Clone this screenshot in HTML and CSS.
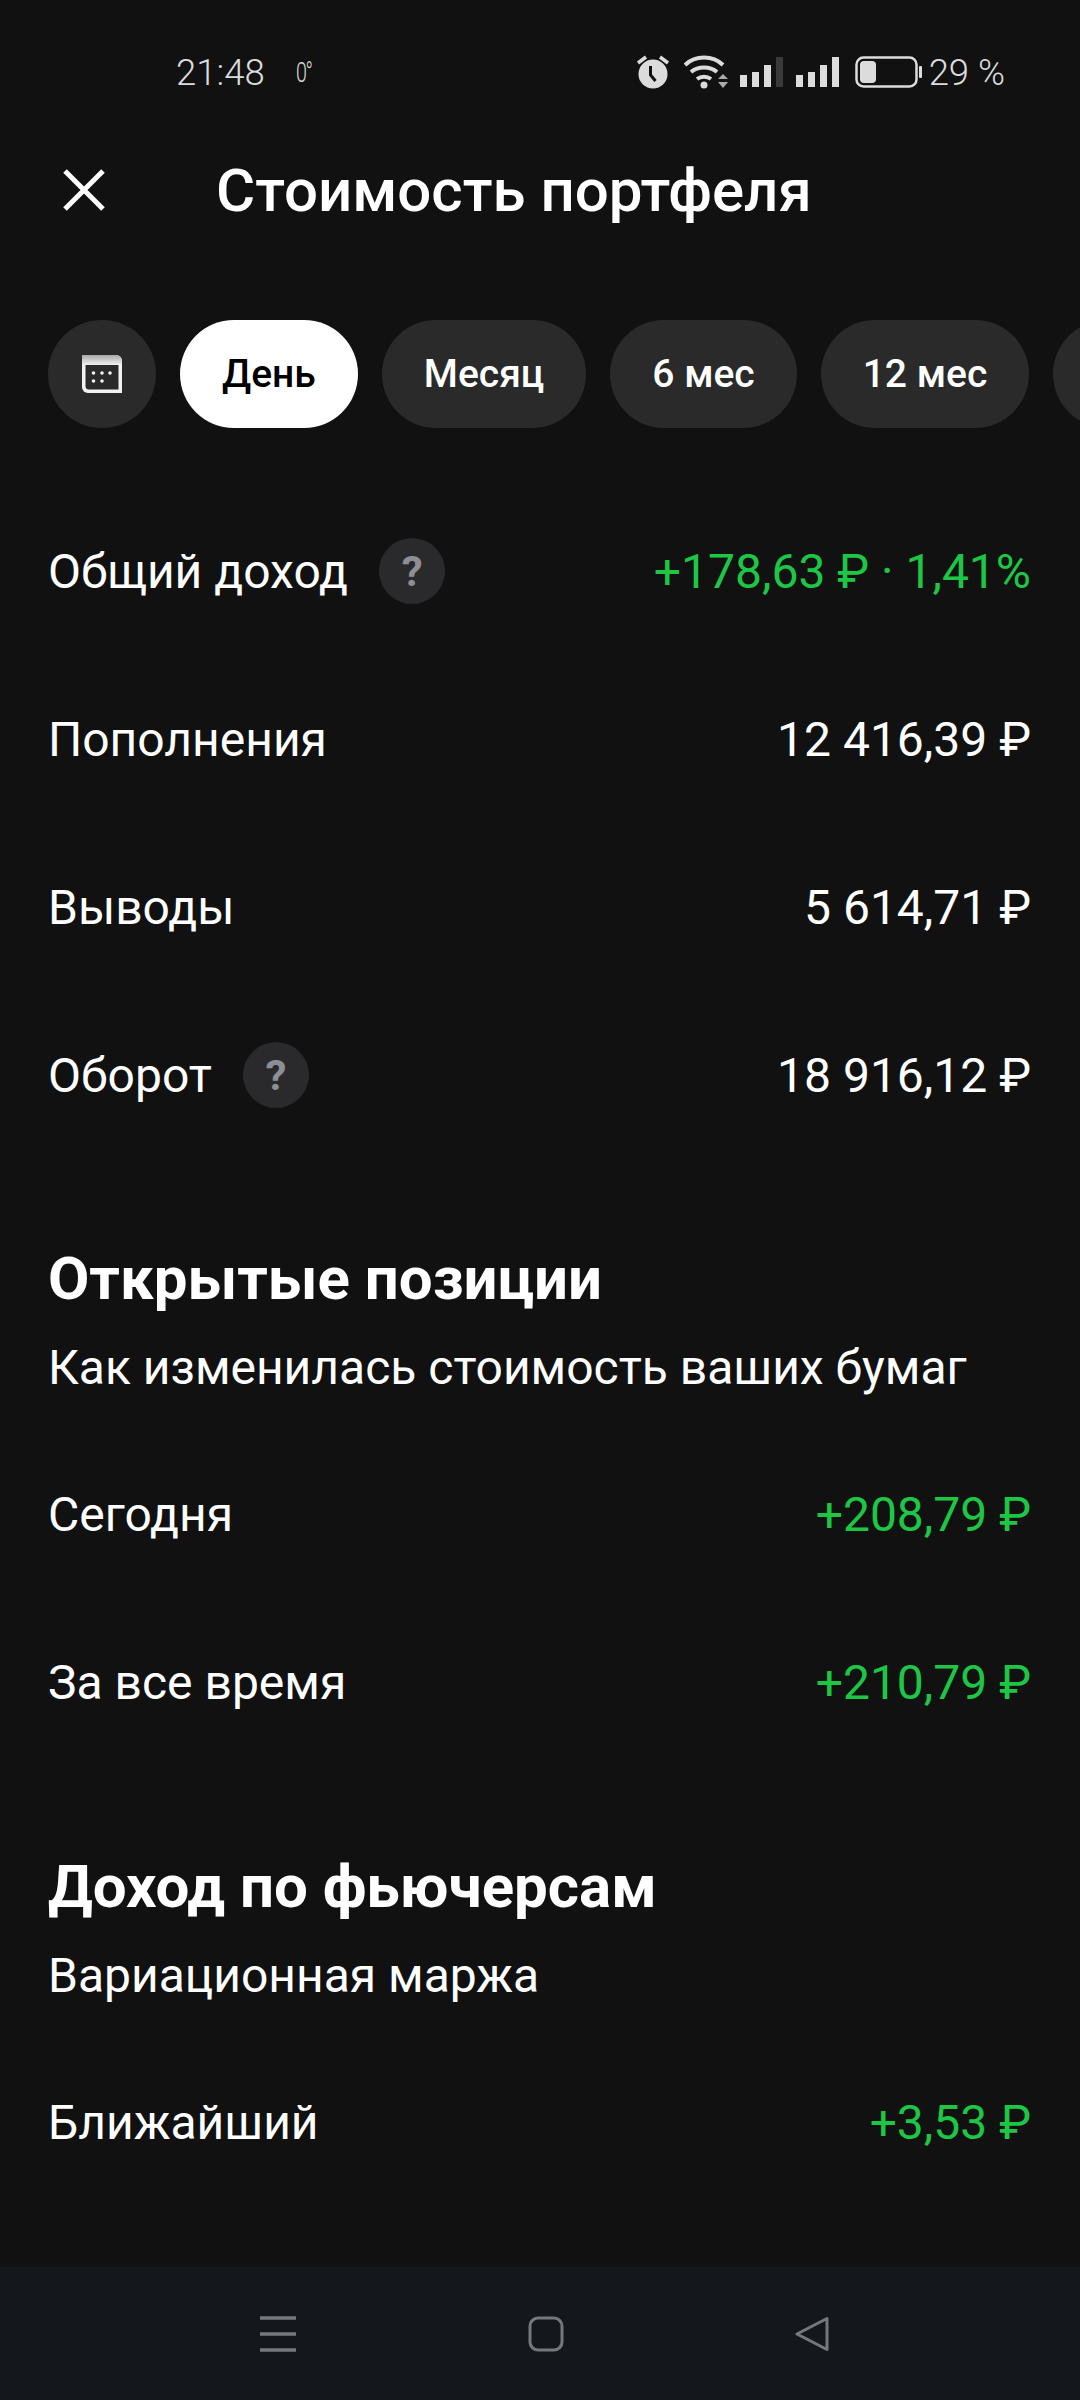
FILE: index.html
```html
<!DOCTYPE html>
<html lang="ru">
<head>
    <meta charset="UTF-8">
    <meta name="viewport" content="width=device-width, initial-scale=1.0">
    <title>Стоимость портфеля</title>
    <link rel="stylesheet" href="styles.css">
</head>
<body>
    <div class="screen">
        <!-- Статус-бар -->
        <div class="status-bar">
            <div class="status-left">
                <span class="time">21:48</span>
                <span class="temp">0°</span>
            </div>
            <div class="status-right">
                <svg class="ic-alarm" width="34" height="34" viewBox="0 0 34 34">
                    <circle cx="17" cy="19" r="14.5" fill="#dcdcdc"/>
                    <path d="M14.5 11v9l5 6" fill="none" stroke="#111112" stroke-width="3"/>
                    <path d="M2 8l8-6M32 8l-8-6" stroke="#dcdcdc" stroke-width="3.5" fill="none"/>
                </svg>
                <svg class="ic-wifi" width="44" height="36" viewBox="0 0 44 36">
                    <path d="M1 11C11 1 29 1 39 11M7 18c7-6 19-6 26 0M13 25c4-3 10-3 14 0" fill="none" stroke="#dcdcdc" stroke-width="4"/>
                    <circle cx="20" cy="31" r="3.5" fill="#dcdcdc"/>
                    <path d="M34 25h10l-5-5zM34 28h10l-5 6z" fill="#aaa"/>
                </svg>
                <div class="signal">
                    <i class="b1"></i><i class="b2"></i><i class="b3"></i><i class="b4 off"></i>
                </div>
                <div class="signal signal-second">
                    <i class="b1"></i><i class="b2"></i><i class="b3"></i><i class="b4"></i>
                </div>
                <svg class="ic-battery" width="67" height="32" viewBox="0 0 67 32">
                    <rect x="1.5" y="1.5" width="60" height="29" rx="7" fill="none" stroke="#dcdcdc" stroke-width="2.5"/>
                    <rect x="5" y="5" width="16" height="22" rx="4" fill="#dcdcdc"/>
                    <rect x="64" y="10" width="3" height="12" rx="1" fill="#dcdcdc"/>
                </svg>
                <span class="percent">29 %</span>
            </div>
        </div>

        <!-- Заголовок -->
        <div class="header">
            <svg class="close" width="44" height="44" viewBox="0 0 44 44">
                <path d="M3 3l38 38M41 3L3 41" stroke="#fff" stroke-width="5" fill="none"/>
            </svg>
            <h1>Стоимость портфеля</h1>
        </div>

        <!-- Периоды -->
        <div class="periods">
            <div class="pill pill-icon">
                <svg width="40" height="38" viewBox="0 0 40 38">
                    <defs>
                        <linearGradient id="calTop" x1="0" y1="0" x2="0" y2="1">
                            <stop offset="0" stop-color="#a8a8a8"/>
                            <stop offset="1" stop-color="#f2f2f2"/>
                        </linearGradient>
                    </defs>
                    <path d="M0 0h34a6 6 0 0 1 6 6v32H6a6 6 0 0 1-6-6z" fill="#f2f2f2"/>
                    <path d="M0 0h34a6 6 0 0 1 6 6v4H0z" fill="url(#calTop)"/>
                    <path d="M3.5 10h33v24.500H7a3.500 3.500 0 0 1-3.500-3.500z" fill="#2a2a2b"/>
                    <g fill="#f2f2f2">
                        <circle cx="11.500" cy="18" r="1.800"/><circle cx="20" cy="18" r="1.800"/><circle cx="28" cy="18" r="1.800"/>
                        <circle cx="11.500" cy="26" r="1.800"/><circle cx="20" cy="26" r="1.800"/>
                    </g>
                </svg>
            </div>
            <div class="pill active">День</div>
            <div class="pill">Месяц</div>
            <div class="pill">6 мес</div>
            <div class="pill">12 мес</div>
            <div class="pill pill-cut"></div>
        </div>

        <!-- Итоги -->
        <div class="rows">
            <div class="row">
                <div class="row-label">Общий доход <span class="hint">?</span></div>
                <div class="green">+178,63 ₽ · 1,41%</div>
            </div>
            <div class="row">
                <div class="row-label">Пополнения</div>
                <div>12 416,39 ₽</div>
            </div>
            <div class="row">
                <div class="row-label">Выводы</div>
                <div>5 614,71 ₽</div>
            </div>
            <div class="row">
                <div class="row-label">Оборот <span class="hint">?</span></div>
                <div>18 916,12 ₽</div>
            </div>
        </div>

        <!-- Открытые позиции -->
        <div class="section">
            <h2>Открытые позиции</h2>
            <p>Как изменилась стоимость ваших бумаг</p>
        </div>
        <div class="rows">
            <div class="row">
                <div class="row-label">Сегодня</div>
                <div class="green">+208,79 ₽</div>
            </div>
            <div class="row">
                <div class="row-label">За все время</div>
                <div class="green">+210,79 ₽</div>
            </div>
        </div>

        <!-- Доход по фьючерсам -->
        <div class="section">
            <h2>Доход по фьючерсам</h2>
            <p>Вариационная маржа</p>
        </div>
        <div class="rows">
            <div class="row">
                <div class="row-label">Ближайший</div>
                <div class="green">+3,53 ₽</div>
            </div>
        </div>

        <!-- Навигация -->
        <div class="nav-bar">
            <svg width="36" height="36" viewBox="0 0 36 36">
                <path d="M0 2h36M0 18h36M0 34h36" stroke="#75787c" stroke-width="3.500" fill="none"/>
            </svg>
            <svg width="36" height="36" viewBox="0 0 36 36">
                <rect x="2" y="2" width="32" height="32" rx="8" fill="none" stroke="#75787c" stroke-width="3"/>
            </svg>
            <svg width="36" height="36" viewBox="0 0 36 36">
                <path d="M32 2.500v31L2 18z" fill="none" stroke="#75787c" stroke-width="3" stroke-linejoin="round"/>
            </svg>
        </div>
    </div>
</body>
</html>
```

FILE: styles.css
```css
* {
    box-sizing: border-box;
}

body {
    margin: 0;
    background-color: #111112;
    font-family: Roboto, "Noto Sans", sans-serif;
    color: #fff;
}

.screen {
    width: 1080px;
    height: 2400px;
    display: flex;
    flex-direction: column;
    overflow: hidden;
}

.status-bar {
    height: 72px;
    margin-top: 36px;
    padding: 0 75px 0 176px;
    display: flex;
    justify-content: space-between;
    align-items: center;
    color: #dcdcdc;
    font-size: 36.500px;
}

.status-left {
    display: flex;
    align-items: center;
    gap: 31px;
}

.time {
    font-weight: 300;
}

.temp {
    font-size: 28px;
    font-weight: 300;
    letter-spacing: -2px;
    transform: scaleX(0.7);
    transform-origin: left center;
}

.status-right {
    display: flex;
    align-items: center;
    gap: 12px;
}

.ic-alarm {
    margin-right: 2px;
}

.signal-second {
    margin-left: 1px;
}

.ic-battery {
    margin-left: 4px;
}

.percent {
    font-weight: 300;
    margin-left: -5px;
}

.signal {
    display: flex;
    align-items: flex-end;
    gap: 5px;
    height: 30px;
}

.signal i {
    width: 7px;
    background-color: #dcdcdc;
}

.signal .b1 { height: 12px; }
.signal .b2 { height: 15px; }
.signal .b3 { height: 22px; }
.signal .b4 { height: 30px; }
.signal .off { background-color: #3a3a3a; }

.header {
    height: 116px;
    margin-top: 24px;
    padding-left: 62px;
    display: flex;
    align-items: center;
}

.close {
    flex-shrink: 0;
}

h1 {
    margin: 0 0 0 110px;
    font-size: 60px;
    font-weight: 500;
}

.periods {
    margin-top: 72px;
    padding-left: 48px;
    display: flex;
    gap: 24px;
}

.pill {
    flex-shrink: 0;
    height: 108px;
    padding: 0 42px;
    border-radius: 54px;
    background-color: #2a2a2b;
    display: flex;
    align-items: center;
    font-size: 39px;
    font-weight: 500;
}

.pill-icon {
    width: 108px;
    padding: 0;
    justify-content: center;
}

.pill-cut {
    width: 108px;
}

.active {
    background-color: #fff;
    color: #000;
}

.rows {
    display: flex;
    flex-direction: column;
}

.periods + .rows {
    margin-top: 59px;
}

.section + .rows {
    margin-top: 32.500px;
}

.row {
    height: 168px;
    padding: 0 49px 0 48px;
    display: flex;
    justify-content: space-between;
    align-items: center;
    font-size: 48px;
}

.row-label {
    display: flex;
    align-items: center;
    gap: 31px;
}

.hint {
    width: 66px;
    height: 66px;
    border-radius: 50%;
    background-color: #2a2a2c;
    color: #8e8e96;
    font-size: 42px;
    font-weight: 700;
    display: flex;
    align-items: center;
    justify-content: center;
}

.green {
    color: #1ec646;
}

.section {
    margin-top: 85px;
    padding: 0 48px;
}

h2 {
    margin: 0;
    font-size: 60px;
    font-weight: 700;
    line-height: 70px;
}

.section p {
    margin: 24px 0 0;
    font-size: 48px;
    line-height: 60px;
}

.nav-bar {
    margin-top: auto;
    height: 133px;
    padding: 0 249px 0 260px;
    background-color: #14181d;
    display: flex;
    justify-content: space-between;
    align-items: center;
}
```
